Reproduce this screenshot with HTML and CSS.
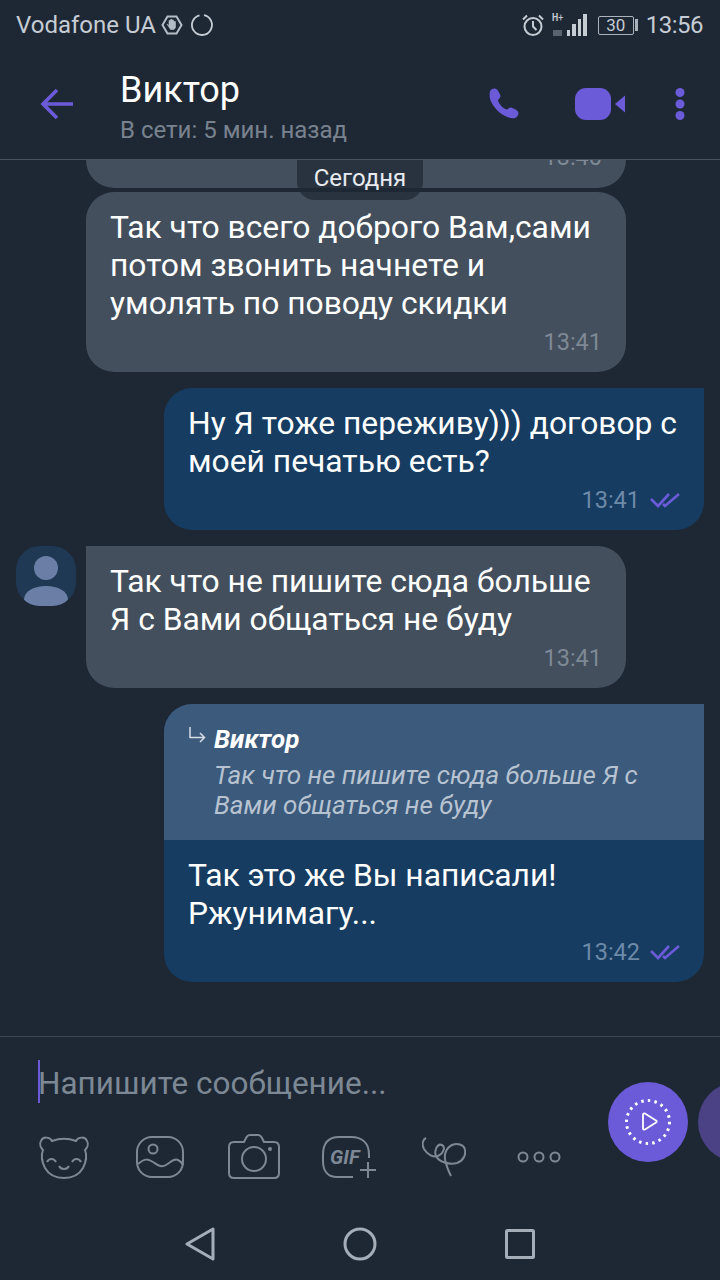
FILE: index.html
```html
<!DOCTYPE html>
<html lang="ru">
  <head>
    <meta charset="UTF-8" />
    <title>Виктор</title>
    <link rel="stylesheet" href="styles.css">
  </head>
  <body>
    <div class="screen">
      <div class="status">
        <div class="status-left">
          <span>Vodafone UA</span>
          <svg width="22" height="22" viewBox="0 0 22 22"><path d="M6.500 2.500h9l5 8.500-5 8.500h-9l-5-8.500z" fill="none" stroke="#b4bcc6" stroke-width="2"/><path d="M6 10l2 1.500V6.500h1.500V10 5.500H11V10 6h1.500v4.500-3H14.500v6l-1.500 2H9.500z" fill="#b4bcc6" stroke="#b4bcc6" stroke-width=".6"/></svg>
          <svg class="spinner" width="22" height="22" viewBox="0 0 22 22"><path d="M13 1.200A10 10 0 1 1 8.500 1.300" fill="none" stroke="#c6ccd4" stroke-width="1.800"/></svg>
        </div>
        <div class="status-right">
          <svg width="22" height="22" viewBox="0 0 22 22" fill="none" stroke="#c6ccd4" stroke-width="2"><circle cx="11" cy="12.500" r="8.500"/><path d="M11 7v5.500l3.500 3.500M1 5.500L5 1.500M21 5.500L17 1.500"/></svg>
          <div class="signal">
            <span class="net"><b>H</b><i>+</i></span>
            <span class="net-arrows"></span>
            <span class="bar h1"></span><span class="bar h2"></span><span class="bar h3"></span><span class="bar h4"></span>
          </div>
          <div class="battery"><span class="battery-box">30</span><span class="battery-tip"></span></div>
          <span class="clock">13:56</span>
        </div>
      </div>

      <header class="top">
        <svg class="back" width="33" height="32" viewBox="0 0 33 32" fill="none" stroke="#6b5bd8" stroke-width="3.600"><path d="M33 16H3M17 2L3 16l14 14"/></svg>
        <div class="contact">
          <div class="contact-name">Виктор</div>
          <div class="contact-seen">В сети: 5 мин. назад</div>
        </div>
        <div class="actions">
          <svg width="34" height="34" viewBox="0 0 34 34"><path d="M3 4.500C4 1.500 8 .500 10 2.500c1.500 2 3 4.500 3.500 6.500.300 2-2.500 3-2.500 4.500 1 3.500 4.500 7.500 8.500 9 1.500.300 2.500-2.500 4.500-2 2.500.800 5 2 6.500 3.500 2 2 .500 6-2.500 7-1.500.500-4 .300-7-.800C13 27.500 7 21 3.500 13.500 2.500 10 2.300 6.500 3 4.500z" fill="#6b5bd8"/></svg>
          <svg class="video" width="50" height="32" viewBox="0 0 50 32"><rect x="0" y="0" width="36" height="32" rx="11" fill="#6b5bd8"/><path d="M50 7.500V24.500L40 16z" fill="#6b5bd8"/></svg>
          <svg width="10" height="32" viewBox="0 0 10 32" fill="#6b5bd8"><circle cx="5" cy="4.500" r="4.500"/><circle cx="5" cy="16" r="4.500"/><circle cx="5" cy="27.500" r="4.500"/></svg>
        </div>
      </header>

      <main class="chat">
        <div class="thread">
          <div class="row incoming">
            <div class="bubble cut">
              <div class="time">13:40</div>
            </div>
          </div>
          <div class="row incoming tight">
            <div class="bubble">
              <p>Так что всего доброго Вам,сами<br>потом звонить начнете и<br>умолять по поводу скидки</p>
              <div class="time">13:41</div>
            </div>
          </div>
          <div class="row outgoing">
            <div class="bubble">
              <p>Ну Я тоже переживу))) договор с<br>моей печатью есть?</p>
              <div class="time">13:41
                <svg width="30" height="16" viewBox="0 0 30 16" fill="none" stroke="#6b5bd8" stroke-width="2.600"><path d="M1 7l7 7L19 2M13 12l2 2L29 2"/></svg>
              </div>
            </div>
          </div>
          <div class="row incoming">
            <div class="avatar">
              <svg width="60" height="60" viewBox="0 0 60 60"><circle cx="30" cy="22" r="12" fill="#6b7fa6"/><path d="M8 54c0-9 10-14 22-14s22 5 22 14c-2 2-4 6-8 6H16c-4 0-6-4-8-6z" fill="#6b7fa6"/></svg>
            </div>
            <div class="bubble square">
              <p>Так что не пишите сюда больше<br>Я с Вами общаться не буду</p>
              <div class="time">13:41</div>
            </div>
          </div>
          <div class="row outgoing">
            <div class="bubble reply">
              <div class="quote">
                <svg width="18" height="18" viewBox="0 0 18 18" fill="none" stroke="#d5dce6" stroke-width="1.500"><path d="M2 1v10.500h14M12 7l4.500 4.500L12 16"/></svg>
                <div>
                  <div class="quote-name">Виктор</div>
                  <div class="quote-text">Так что не пишите сюда больше Я с Вами общаться не буду</div>
                </div>
              </div>
              <div class="reply-body">
                <p>Так это же Вы написали!<br>Ржунимагу...</p>
                <div class="time">13:42
                  <svg width="30" height="16" viewBox="0 0 30 16" fill="none" stroke="#6b5bd8" stroke-width="2.600"><path d="M1 7l7 7L19 2M13 12l2 2L29 2"/></svg>
                </div>
              </div>
            </div>
          </div>
        </div>
        <div class="date-pill">Сегодня</div>
      </main>

      <footer class="composer">
        <div class="input"><span class="caret"></span>Напишите сообщение...</div>
        <div class="tools">
          <svg width="52" height="46" viewBox="0 0 52 46" fill="none" stroke="#7d8895" stroke-width="2"><path d="M14 7c-2-4-9-5-11 0-2 3 0 7 2 9-2 5-1 12 2 18 4 7 10 10 19 10s15-3 19-10c3-6 4-13 2-18 2-2 4-6 2-9-2-5-9-4-11 0-8-3-16-3-24 0z"/><path d="M9 28c2-4 7-4 9 0M34 28c2-4 7-4 9 0M21 32c2 4 8 4 10 0"/></svg>
          <svg width="50" height="44" viewBox="0 0 50 44" fill="none" stroke="#7d8895" stroke-width="2"><rect x="2" y="2" width="46" height="40" rx="15"/><circle cx="18" cy="14" r="4.500"/><path d="M3 29c7-6 10-5 15-2s8 6 13 3 8-7 12-5c2 .800 4 3 5 5"/></svg>
          <svg width="52" height="46" viewBox="0 0 52 46" fill="none" stroke="#7d8895" stroke-width="2"><path d="M6 8h10l2-4c1-2 2-3 4-3h8c2 0 3 1 4 3l2 4h10c3 0 5 2 5 5v26c0 3-2 5-5 5H6c-3 0-5-2-5-5V13c0-3 2-5 5-5z"/><circle cx="26" cy="25" r="12"/><circle cx="42" cy="15" r="2" fill="#7d8895" stroke="none"/></svg>
          <div class="gif">
            <svg width="55" height="44" viewBox="0 0 55 44" fill="none" stroke="#7d8895" stroke-width="2"><path d="M32 42H16C7 42 2 36 2 26v-6C2 8 8 2 18 2h12c11 0 18 6 18 18v3"/><path d="M47 27v16M39 35h16"/></svg>
            <span>GIF</span>
          </div>
          <svg width="44" height="40" viewBox="0 0 44 40" fill="none" stroke="#7d8895" stroke-width="2"><path d="M4 1C0 3 0 8 2 12c3 5 9 9 14 7 5-2 8-9 4-11-5-2-8 6-6 11 3 6 13 9 21 7 6-2 9-8 8-13-1-6-8-7-13-5-6 3-9 10-6 18 1 5 3 9 5 13"/></svg>
          <svg width="44" height="12" viewBox="0 0 44 12" fill="none" stroke="#7d8895" stroke-width="2"><circle cx="6" cy="6" r="4.500"/><circle cx="22" cy="6" r="4.500"/><circle cx="38" cy="6" r="4.500"/></svg>
        </div>
        <div class="record">
          <svg width="46" height="46" viewBox="0 0 46 46" fill="none" stroke="#fff"><circle cx="23" cy="23" r="21.500" stroke-width="3" stroke-dasharray="2.500 4.200"/><path d="M18 15.500c0-1 1-1.500 2-1l11 7c1 .700 1 1.300 0 2l-11 7c-1 .500-2 0-2-1z" stroke-width="1.800"/></svg>
        </div>
        <div class="record-next"></div>
      </footer>

      <nav class="softkeys">
        <svg width="30" height="34" viewBox="0 0 30 34" fill="none" stroke="#a5adb8" stroke-width="3" stroke-linejoin="round"><path d="M28 2v30L2 17z"/></svg>
        <svg width="34" height="34" viewBox="0 0 34 34" fill="none" stroke="#a5adb8" stroke-width="3"><circle cx="17" cy="17" r="15"/></svg>
        <svg width="30" height="30" viewBox="0 0 30 30" fill="none" stroke="#a5adb8" stroke-width="3" stroke-linejoin="round"><rect x="1.500" y="1.500" width="27" height="27" rx="1"/></svg>
      </nav>
    </div>
  </body>
</html>
```

FILE: styles.css
```css
* {
  margin: 0;
  padding: 0;
  box-sizing: border-box;
}
body {
  background: #1e2835;
  font-family: Roboto, sans-serif;
}
.screen {
  width: 720px;
  height: 1280px;
  display: flex;
  flex-direction: column;
  overflow: hidden;
}

/* status bar */
.status {
  height: 50px;
  padding: 0 17px 0 16px;
  display: flex;
  justify-content: space-between;
  align-items: center;
  color: #c6ccd4;
  font-size: 24px;
}
.status-left,
.status-right {
  display: flex;
  align-items: center;
}
.status-left {
  gap: 5px;
}
.status-left .spinner {
  margin-left: 3px;
}
.clock {
  font-size: 24px;
  letter-spacing: -.5px;
}
.signal {
  position: relative;
  width: 35px;
  height: 22px;
  margin-left: 8px;
  display: flex;
  align-items: flex-end;
  justify-content: flex-end;
  gap: 2px;
}
.net {
  position: absolute;
  left: 0;
  top: -2px;
  font-size: 11px;
  line-height: 12px;
  transform: scaleX(.8);
  transform-origin: left;
}
.net i {
  font-style: normal;
}
.net-arrows {
  position: absolute;
  left: 1px;
  bottom: 0;
  width: 9px;
  height: 6px;
  background: #59636f;
}
.bar {
  width: 3.500px;
  background: #c6ccd4;
}
.h1 { height: 6px; }
.h2 { height: 12px; }
.h3 { height: 17px; }
.h4 { height: 22px; }
.battery {
  display: flex;
  align-items: center;
  gap: 1px;
  margin-left: 11px;
  margin-right: 8px;
}
.battery-box {
  width: 36px;
  height: 19px;
  border: 1.500px solid #aab2bc;
  border-radius: 2px;
  font-size: 17px;
  line-height: 16px;
  text-align: center;
}
.battery-tip {
  width: 3px;
  height: 12px;
  background: #aab2bc;
}

/* header */
.top {
  height: 110px;
  display: flex;
  align-items: center;
  border-bottom: 1px solid #465260;
  padding-bottom: 1px;
}
.back {
  margin-left: 40px;
  margin-right: 47px;
}
.contact {
  flex: 1;
  margin-top: 6px;
}
.contact-name {
  color: #fff;
  font-size: 36px;
  line-height: 42px;
}
.contact-seen {
  color: #79838f;
  font-size: 24px;
  line-height: 30px;
  margin-top: 4px;
}
.actions {
  display: flex;
  align-items: center;
  margin-right: 35px;
}
.video {
  margin-left: 54px;
}
.actions svg:last-child {
  margin-left: 50px;
}

/* chat */
.chat {
  position: relative;
  height: 876px;
  overflow: hidden;
}
.thread {
  display: flex;
  flex-direction: column;
  gap: 16px;
  padding: 0 16px;
}
.row {
  display: flex;
}
.tight {
  margin-top: -12px;
}
.incoming {
  padding-left: 70px;
}
.incoming .avatar {
  margin-left: -70px;
  margin-right: 10px;
}
.outgoing {
  justify-content: flex-end;
}
.bubble {
  width: 540px;
  padding: 16px 24px 15px;
  border-radius: 28px;
  color: #fff;
  font-size: 31.800px;
  line-height: 38px;
}
.incoming .bubble {
  background: #434f5d;
}
.outgoing .bubble {
  background: #163c61;
  border-top-right-radius: 0;
}
.incoming .square {
  border-top-left-radius: 0;
}
.bubble.cut {
  height: 28px;
  padding: 0 24px;
  border-radius: 0 0 28px 28px;
}
.time {
  margin-top: 5px;
  color: #7e8995;
  font-size: 23.500px;
  line-height: 30px;
  text-align: right;
}
.cut .time {
  margin-top: -18px;
}
.outgoing .time {
  color: #6d8aa8;
  display: flex;
  justify-content: flex-end;
  align-items: center;
  gap: 10px;
}
.avatar {
  width: 60px;
  height: 60px;
  border-radius: 24px;
  background: #1f3853;
  overflow: hidden;
}
.avatar svg {
  display: block;
}
.date-pill {
  position: absolute;
  top: 0;
  left: 297px;
  width: 126px;
  height: 40px;
  background: rgba(30, 40, 53, .7);
  border-radius: 0 0 18px 18px;
  color: #e8ecf0;
  font-size: 24px;
  line-height: 36px;
  text-align: center;
}

/* reply */
.reply.bubble {
  padding: 0;
  overflow: hidden;
}
.quote {
  height: 136px;
  background: #3c5a7c;
  padding: 20px 24px 0;
  display: flex;
  gap: 8px;
}
.quote svg {
  flex: none;
  margin-top: 2px;
}
.quote-name {
  font-size: 26px;
  font-weight: 700;
  font-style: italic;
  line-height: 30px;
}
.quote-text {
  margin-top: 6px;
  color: #b7c3d1;
  font-size: 26px;
  font-style: italic;
  line-height: 30px;
}
.reply-body {
  padding: 16px 24px 15px;
}

/* composer */
.composer {
  position: relative;
  height: 164px;
  border-top: 1px solid #3c4753;
}
.input {
  position: relative;
  padding: 27px 0 0 38px;
  color: #7d8895;
  font-size: 31.500px;
  line-height: 40px;
}
.caret {
  position: absolute;
  left: 38px;
  top: 23px;
  width: 2px;
  height: 43px;
  background: #6b5bd8;
}
.tools {
  display: flex;
  align-items: center;
  margin-top: 30px;
  padding-left: 38px;
  height: 46px;
}
.tools > * {
  flex: none;
}
.tools > svg:nth-child(2) {
  margin-left: 45px;
}
.tools > svg:nth-child(3) {
  margin-left: 43px;
}
.gif {
  position: relative;
  width: 55px;
  height: 44px;
  margin-left: 41px;
}
.gif span {
  position: absolute;
  left: 9px;
  top: 10px;
  color: #7d8895;
  font-size: 20px;
  font-weight: 700;
  font-style: italic;
  line-height: 24px;
}
.tools > svg:nth-child(5) {
  margin-left: 46px;
}
.tools > svg:nth-child(6) {
  margin-left: 51px;
}
.record {
  position: absolute;
  left: 608px;
  top: 45px;
  width: 80px;
  height: 80px;
  border-radius: 50%;
  background: #6b5bd8;
  display: flex;
  align-items: center;
  justify-content: center;
}
.record-next {
  position: absolute;
  left: 698px;
  top: 45px;
  width: 80px;
  height: 80px;
  border-radius: 50%;
  background: #4a4285;
}

/* nav */
.softkeys {
  flex: 1;
  display: flex;
  align-items: center;
  padding-top: 8px;
}
.softkeys svg:nth-child(1) {
  margin-left: 185px;
}
.softkeys svg:nth-child(2) {
  margin-left: 128px;
}
.softkeys svg:nth-child(3) {
  margin-left: 128px;
}
```
